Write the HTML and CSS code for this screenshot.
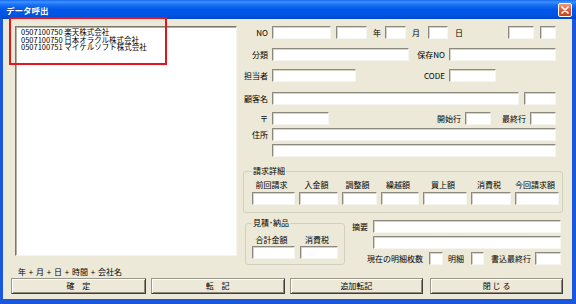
FILE: index.html
```html
<!DOCTYPE html>
<html>
<head>
<meta http-equiv="Content-Type" content="text/html; charset=utf-8"/>
<title>データ呼出</title>
<link rel="stylesheet" href="styles.css">
</head>
<body>
<div class="window">
  <div class="titlebar">
    <span class="title">データ呼出</span>
    <span class="close"><svg width="12" height="12" viewBox="0 0 12 12"><path d="M3 3L9 9M9 3L3 9" stroke="#fff" stroke-width="1.7" stroke-linecap="round"/></svg></span>
  </div>

  <div class="client">
    <div class="main">
      <div class="list">
        <div>0507100750 楽天株式会社</div>
        <div>0507100750 日本オラクル株式会社</div>
        <div>0507100751 マイケルソフト株式会社</div>
      </div>

      <div class="form">
        <div class="row">
          <span class="rl w25">NO</span>
          <input class="box w59">
          <input class="box w31 ml5">
          <span class="txt ml6">年</span>
          <input class="box w21 ml4">
          <span class="txt ml6">月</span>
          <input class="box w20 ml8">
          <span class="txt ml7">日</span>
          <input class="box w26 ml45">
          <input class="box w16 ml6">
        </div>
        <div class="row mt9">
          <span class="rl w25">分類</span>
          <input class="box w137">
          <span class="rl w36">保存NO</span>
          <input class="box w107">
        </div>
        <div class="row mt8">
          <span class="rl w25">担当者</span>
          <input class="box w84">
          <span class="rl w89">CODE</span>
          <input class="box w47">
        </div>
        <div class="row mt10">
          <span class="rl w25">顧客名</span>
          <input class="box w247">
          <input class="box w32 ml5">
        </div>
        <div class="row mt7">
          <span class="rl w25">〒</span>
          <input class="box w57">
          <span class="rl w132">開始行</span>
          <input class="box w26">
          <span class="rl w35">最終行</span>
          <input class="box w26">
        </div>
        <div class="row mt3">
          <span class="rl w25">住所</span>
          <input class="box w284">
        </div>
        <div class="row mt3">
          <span class="rl w25"></span>
          <input class="box w284">
        </div>

        <fieldset class="grp bill">
          <legend>請求詳細</legend>
          <div class="cols">
            <div class="col"><span class="cap">前回請求</span><input class="box w43"></div>
            <div class="col"><span class="cap">入金額</span><input class="box w39"></div>
            <div class="col"><span class="cap">調整額</span><input class="box w35"></div>
            <div class="col"><span class="cap">繰越額</span><input class="box w38"></div>
            <div class="col"><span class="cap">買上額</span><input class="box w44"></div>
            <div class="col"><span class="cap">消費税</span><input class="box w40"></div>
            <div class="col"><span class="cap">今回請求額</span><input class="box w44"></div>
          </div>
        </fieldset>

        <div class="lower">
          <fieldset class="grp est">
            <legend>見積･納品</legend>
            <div class="cols gap5">
              <div class="col"><span class="cap">合計金額</span><input class="box w43"></div>
              <div class="col"><span class="cap">消費税</span><input class="box w38"></div>
            </div>
          </fieldset>

          <div class="memo">
            <div class="row">
              <span class="txt w21">摘要</span>
              <input class="box w188">
            </div>
            <div class="row mt3">
              <input class="box w188 ml21">
            </div>
            <div class="row mt3">
              <span class="txt ml15">現在の明細枚数</span>
              <input class="box w14 ml6">
              <span class="txt ml5">明細</span>
              <input class="box w13 ml7">
              <span class="txt ml7">書込最終行</span>
              <input class="box w26 ml4">
            </div>
          </div>
        </div>
      </div>
    </div>

    <div class="hint">年 + 月 + 日 + 時間 + 会社名</div>

    <div class="buttons">
      <button class="btn b1">確　定</button>
      <button class="btn b2">転　記</button>
      <button class="btn b3">追加転記</button>
      <button class="btn b4">閉 じ る</button>
    </div>
  </div>

  <div class="mark"></div>
</div>
</body>
</html>
```

FILE: styles.css
```css
html, body {
  margin: 0;
  padding: 0;
}

body {
  font-family: "Noto Sans CJK JP", sans-serif;
  font-size: 8px;
  color: #000;
  background: #ECE9D8;
}

.window {
  position: relative;
  width: 576px;
  height: 304px;
  display: flex;
  flex-direction: column;
  background: #1857DE;
}

/* title bar */
.titlebar {
  flex: none;
  height: 19px;
  display: flex;
  align-items: center;
  padding-left: 6px;
  background: linear-gradient(#1468F0 0%, #3D93FF 10%, #1A70F4 25%, #0058E8 50%, #0054E2 80%, #0047CC 100%);
}

.title {
  flex: 1;
  color: #fff;
  font-weight: bold;
  font-size: 8.5px;
  line-height: 10px;
}

.close {
  box-sizing: border-box;
  width: 14px;
  height: 14px;
  margin: 1px 4px 0 0;
  border: 1px solid #fff;
  border-radius: 2px;
  background: linear-gradient(#F09A7C, #E0603A 45%, #C9421E);
  display: flex;
  align-items: center;
  justify-content: center;
}

/* window body */
.client {
  flex: 1;
  margin: 0 4px 5px 3px;
  padding: 7px 9px 0 5px;
  background: #ECE9D8;
  display: flex;
  flex-direction: column;
}

.main {
  display: flex;
  align-items: flex-start;
}

.list {
  box-sizing: border-box;
  width: 222px;
  height: 230px;
  margin-left: 7px;
  padding: 1px 0 0 5px;
  background: #fff;
  border: 1px solid;
  border-color: #7A7868 #F4F3EE #F4F3EE #7A7868;
  box-shadow: inset 1px 1px 0 #B4B1A4;
  font-size: 7.5px;
  line-height: 7.5px;
  white-space: nowrap;
}

.form {
  width: 320px;
  margin-left: 6px;
}

.row {
  display: flex;
  align-items: center;
  height: 13px;
  white-space: nowrap;
}

.rl {
  flex: none;
  text-align: right;
  margin-right: 4px;
  line-height: 10px;
}

.txt {
  flex: none;
  line-height: 10px;
}

.box {
  flex: none;
  box-sizing: border-box;
  height: 13px;
  margin: 0;
  padding: 0;
  font: inherit;
  background: #fff;
  border: 1px solid;
  border-color: #8D8A7D #F6F5F0 #F6F5F0 #8D8A7D;
  box-shadow: inset 1px 1px 0 #D6D3C6;
  outline: none;
}

/* group boxes */
.grp {
  margin: 0;
  min-width: 0;
  border: 1px solid #D0D0BF;
  border-radius: 3px;
}

.grp legend {
  padding: 0 1px;
  line-height: 10px;
}

.bill {
  margin-top: 9px;
  padding: 4px 3px 7px 8px;
}

.cols {
  display: flex;
  gap: 4px;
}

.cols.gap5 {
  gap: 5px;
}

.col {
  display: flex;
  flex-direction: column;
  align-items: center;
}

.cap {
  line-height: 10px;
  margin: 0 4px 2px 0;
  white-space: nowrap;
}

.lower {
  display: flex;
  align-items: flex-start;
  margin-top: 5px;
}

.est {
  box-sizing: border-box;
  width: 100px;
  margin-left: 2px;
  padding: 7px 6px 5px 6px;
}

.est .cap {
  margin-bottom: 1px;
}

.memo {
  margin: 2px 0 0 7px;
}

/* bottom */
.hint {
  margin-top: 2px;
  padding-left: 10px;
  line-height: 10px;
  word-spacing: 1px;
}

.buttons {
  display: flex;
  margin-top: 1px;
}

.btn {
  box-sizing: border-box;
  height: 16px;
  margin: 0;
  padding: 0;
  font: inherit;
  color: #000;
  background: #ECE9D8;
  border: 1px solid;
  border-color: #9A978A #3F3E38 #3F3E38 #9A978A;
  box-shadow: inset 1px 1px 0 #fff, inset -1px -1px 0 #8E8B7E;
  line-height: 12px;
}

.b1 { width: 135px; margin-left: 3px; }
.b2 { width: 134px; margin-left: 5px; }
.b3 { width: 134px; margin-left: 5px; }
.b4 { width: 133px; margin-left: 7px; }

/* red annotation frame over the list */
.mark {
  position: absolute;
  left: 9px;
  top: 17px;
  width: 158px;
  height: 48px;
  box-sizing: border-box;
  border: 2px solid #E3161F;
}

/* sizes */
.w13 { width: 13px; }
.w14 { width: 14px; }
.w16 { width: 16px; }
.w20 { width: 20px; }
.w21 { width: 21px; }
.w25 { width: 25px; }
.w26 { width: 26px; }
.w31 { width: 31px; }
.w32 { width: 32px; }
.w35 { width: 35px; }
.w36 { width: 36px; }
.w38 { width: 38px; }
.w39 { width: 39px; }
.w40 { width: 40px; }
.w43 { width: 43px; }
.w44 { width: 44px; }
.w47 { width: 47px; }
.w57 { width: 57px; }
.w59 { width: 59px; }
.w84 { width: 84px; }
.w89 { width: 89px; }
.w107 { width: 107px; }
.w132 { width: 132px; }
.w137 { width: 137px; }
.w188 { width: 188px; }
.w247 { width: 247px; }
.w284 { width: 284px; }

.ml4 { margin-left: 4px; }
.ml5 { margin-left: 5px; }
.ml6 { margin-left: 6px; }
.ml7 { margin-left: 7px; }
.ml8 { margin-left: 8px; }
.ml15 { margin-left: 15px; }
.ml21 { margin-left: 21px; }
.ml45 { margin-left: 45px; }

.mt3 { margin-top: 3px; }
.mt7 { margin-top: 7px; }
.mt8 { margin-top: 8px; }
.mt9 { margin-top: 9px; }
.mt10 { margin-top: 10px; }
```
